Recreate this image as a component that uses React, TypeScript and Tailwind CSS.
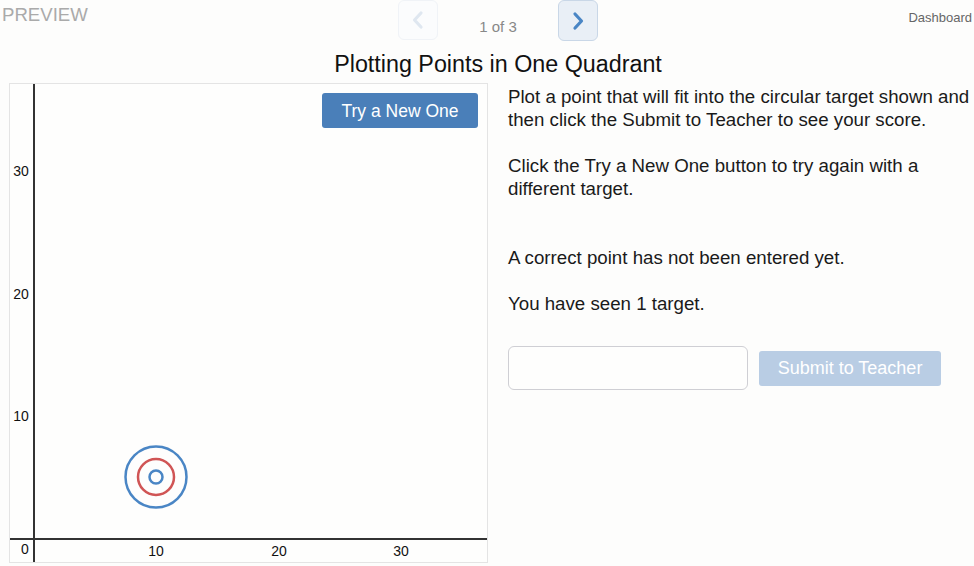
export default function App() {
  return (
    <div className="w-[974px] h-[566px] overflow-hidden bg-[#fdfdfc] font-['Liberation_Sans',Arial,sans-serif] text-[#222]">
      {/* top bar */}
      <div className="flex h-[42px]">
        <div className="w-[398px] pl-[2px] pt-[3px] text-[18.6px] leading-[24px] text-[#aaaaaa]">PREVIEW</div>
        <div className="flex items-start">
          <button className="w-[40px] h-[40px] flex items-center justify-center rounded-md border border-[#f0f3f7] bg-[#fbfcfd]">
            <svg width="16" height="20" viewBox="0 0 16 20">
              <path d="M11 3 L4.5 10 L11 17" fill="none" stroke="#dfe7f0" strokeWidth="3.2" strokeLinecap="round" strokeLinejoin="round" />
            </svg>
          </button>
          <div className="w-[120px] pt-[18px] text-center text-[15px] leading-[18px] text-[#888]">1 of 3</div>
          <button className="w-[40px] h-[41px] flex items-center justify-center rounded-md border border-[#c9d7e7] bg-[#e9eff6]">
            <svg width="16" height="20" viewBox="0 0 16 20">
              <path d="M5 3 L11.5 10 L5 17" fill="none" stroke="#4a86c5" strokeWidth="3.2" strokeLinecap="round" strokeLinejoin="round" />
            </svg>
          </button>
        </div>
        <div className="flex-1 pr-[2px] pt-[10px] text-right text-[13px] leading-[16px] text-[#666]">Dashboard</div>
      </div>

      {/* title */}
      <div className="pl-[22px] pt-[2px] text-center text-[23.3px] leading-[40px] text-[#111]">Plotting Points in One Quadrant</div>

      <div className="flex pl-[9px] -mt-[1px]">
        {/* graph */}
        <div className="relative w-[479px] h-[480px] border border-[#e4e4e4] bg-[#fefefd]">
          <svg width="477" height="478" viewBox="0 0 477 478" className="block">
            <line x1="24" y1="0" x2="24" y2="478" stroke="#333" strokeWidth="2" />
            <line x1="0" y1="455" x2="477" y2="455" stroke="#333" strokeWidth="2" />
            <g fontFamily="Liberation Sans, Arial, sans-serif" fontSize="14" fill="#111" textAnchor="middle" dominantBaseline="central">
              <text x="11" y="87">30</text>
              <text x="11" y="210">20</text>
              <text x="11" y="332">10</text>
              <text x="15" y="465">0</text>
              <text x="146" y="467">10</text>
              <text x="269" y="467">20</text>
              <text x="391" y="467">30</text>
            </g>
            <circle cx="146" cy="393" r="30.5" fill="none" stroke="#4a86c5" strokeWidth="2.5" />
            <circle cx="146" cy="393" r="18" fill="none" stroke="#d05555" strokeWidth="2.5" />
            <circle cx="146" cy="393" r="6.5" fill="none" stroke="#4a86c5" strokeWidth="2.5" />
          </svg>
          <button className="absolute left-[312px] top-[9px] w-[156px] h-[35px] rounded-[3px] bg-[#4a7fb9] pt-[2px] text-white text-[17.5px] leading-[33px]">
            Try a New One
          </button>
        </div>

        {/* instructions */}
        <div className="ml-[20px] text-[18.7px] leading-[23px] text-[#1a1a1a]">
          <p className="mt-[2px]">
            Plot a point that will fit into the circular target shown and
            <br />
            then click the Submit to Teacher to see your score.
          </p>
          <p className="mt-[23px]">
            Click the Try a New One button to try again with a
            <br />
            different target.
          </p>
          <p className="mt-[46px]">A correct point has not been entered yet.</p>
          <p className="mt-[23px]">You have seen 1 target.</p>
          <div className="mt-[31px] flex items-center gap-[11px]">
            <input className="w-[240px] h-[44px] rounded-md border border-[#cfcfd4] bg-[#fefefd] px-3 outline-none" />
            <button className="w-[182px] h-[35px] rounded-[3px] bg-[#b9cde4] text-white text-[18px] leading-[35px]">
              Submit to Teacher
            </button>
          </div>
        </div>
      </div>
    </div>
  );
}
